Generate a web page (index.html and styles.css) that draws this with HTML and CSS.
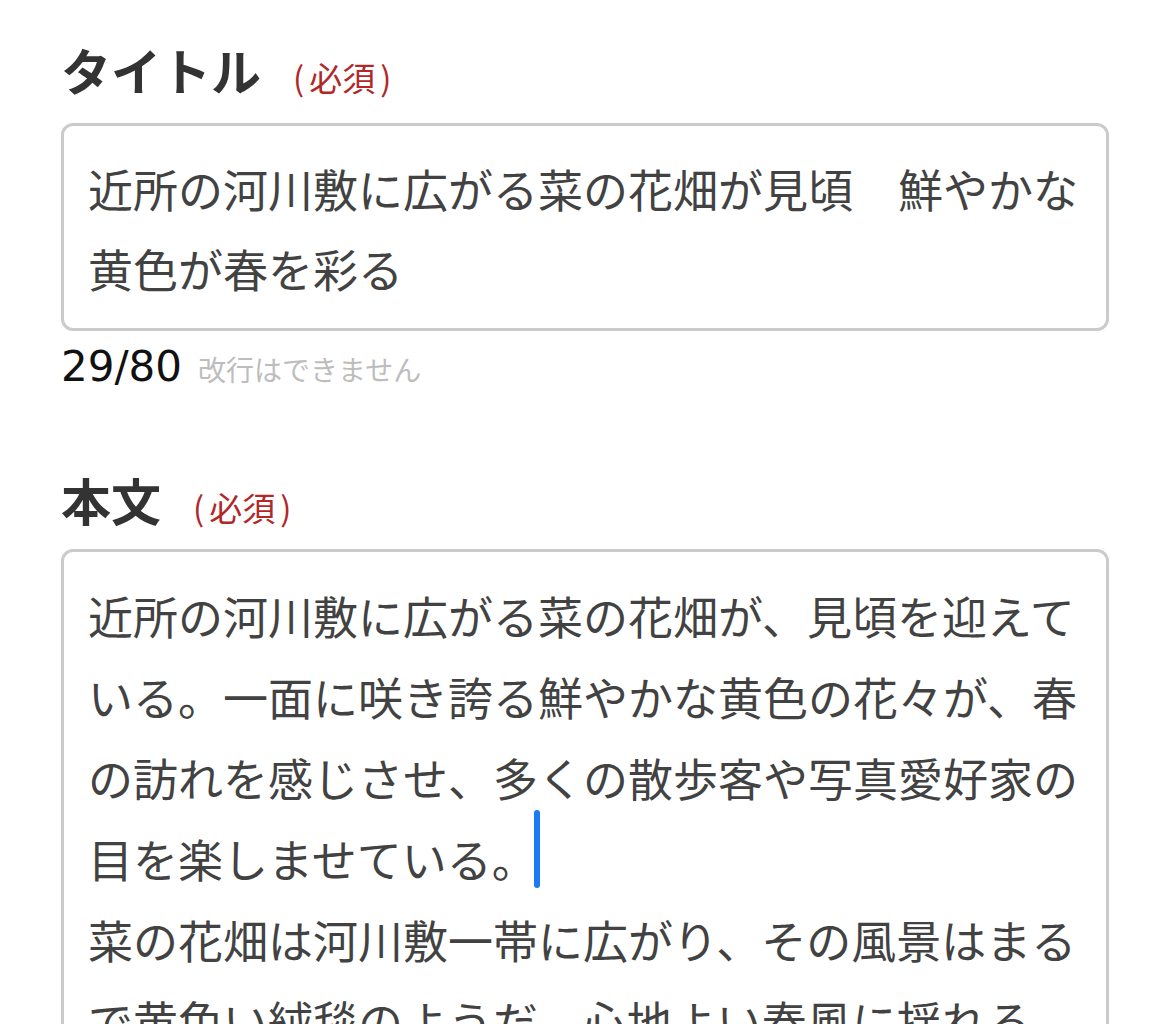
FILE: index.html
```html
<!DOCTYPE html>
<html lang="ja">
<head>
<meta charset="utf-8">
<title>投稿フォーム</title>
<link rel="stylesheet" href="styles.css">
</head>
<body>
<main class="form">
  <section class="field">
    <div class="label-row">
      <span class="label">タイトル</span>
      <span class="required">(<span class="req-text">必須</span>)</span>
    </div>
    <div class="input title-input">近所の河川敷に広がる菜の花畑が見頃　鮮やかな黄色が春を彩る</div>
    <div class="meta-row">
      <span class="counter">29/80</span>
      <span class="hint">改行はできません</span>
    </div>
  </section>
  <section class="field body-field">
    <div class="label-row">
      <span class="label">本文</span>
      <span class="required">(<span class="req-text">必須</span>)</span>
    </div>
    <div class="input body-input">近所の河川敷に広がる菜の花畑が、見頃を迎えている。一面に咲き誇る鮮やかな黄色の花々が、春の訪れを感じさせ、多くの散歩客や写真愛好家の目を楽しませている。<span class="caret"></span><br>菜の花畑は河川敷一帯に広がり、その風景はまるで黄色い絨毯のようだ。心地よい春風に揺れる<br>菜の花の姿に、足を止めて見入る人も多い。<br>週末には家族連れでにぎわいを見せている。</div>
  </section>
</main>
</body>
</html>
```
FILE: styles.css
```css
html, body {
  margin: 0;
  padding: 0;
  background: #ffffff;
}

body {
  font-family: "Noto Sans CJK JP", "Noto Sans", sans-serif;
  color: #333333;
}

.form {
  padding: 38px 61px 0 61px;
}

.label-row {
  display: flex;
  align-items: baseline;
  gap: 32px;
  height: 62px;
  line-height: 62px;
}

.label {
  font-size: 50px;
  font-weight: 700;
  color: #333333;
}

.required {
  font-size: 33px;
  color: #b0282a;
}

.req-text {
  margin: 0 5px;
}

.input {
  border: 3px solid #cbcbcb;
  border-radius: 12px;
  padding: 23px 24px 19px 24px;
  font-size: 45px;
  line-height: 80px;
  color: #424242;
  line-break: strict;
}

.title-input {
  margin-top: 23px;
}

.meta-row {
  display: flex;
  align-items: baseline;
  gap: 16px;
  margin-top: 12px;
  height: 48px;
  line-height: 48px;
}

.counter {
  font-family: "DejaVu Sans", sans-serif;
  font-size: 42px;
  color: #111111;
}

.hint {
  font-size: 28px;
  color: #bdbdbd;
}

.body-field {
  margin-top: 77px;
}

.body-input {
  margin-top: 19px;
  line-height: 81px;
  padding-bottom: 60px;
}

.caret {
  display: inline-block;
  width: 6px;
  height: 78px;
  margin-top: -14px;
  margin-left: -3px;
  background: #1a7cf0;
  border-radius: 3px;
  vertical-align: -10px;
}
```
